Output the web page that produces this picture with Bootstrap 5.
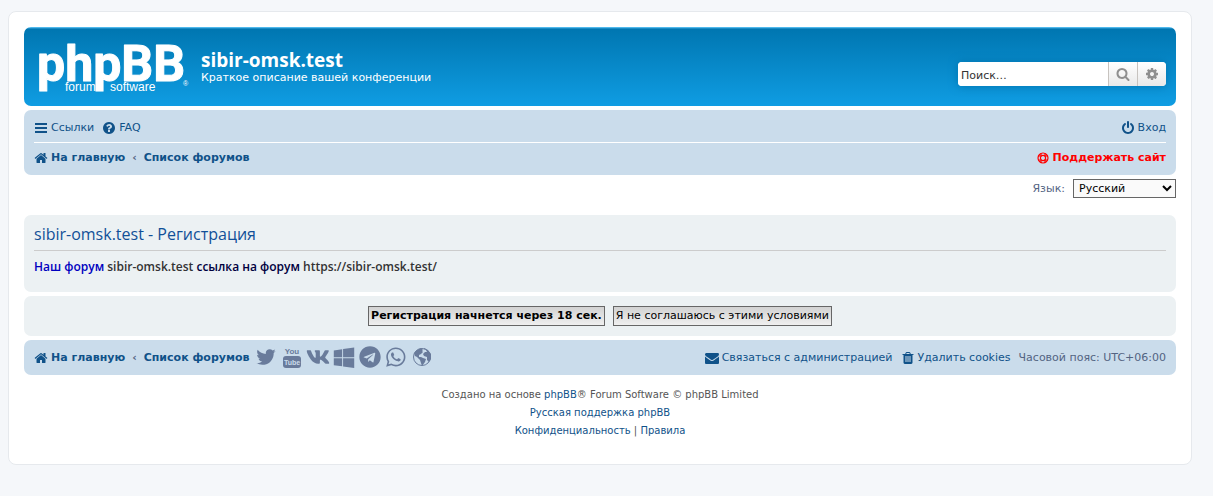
<!DOCTYPE html>
<html lang="ru">
<head>
<meta charset="utf-8">
<meta name="viewport" content="width=device-width, initial-scale=1">
<title>sibir-omsk.test - Регистрация</title>
<link href="https://cdn.jsdelivr.net/npm/bootstrap@5.3.0/dist/css/bootstrap.min.css" rel="stylesheet">
<script src="https://cdn.jsdelivr.net/npm/bootstrap@5.3.0/dist/js/bootstrap.bundle.min.js" defer></script>
<style>
  body { background: #f5f7fa; color: #536482; font: 11px/18px Verdana, "DejaVu Sans", sans-serif; padding: 11px 13px 31px 0; }
  a { color: #105289; text-decoration: none; }
  a:hover { color: #d31141; text-decoration: underline; }
  svg { fill: currentColor; flex: none; }
  .page-wrap { max-width: 1184px; background: #fff; border: 1px solid #e6e9ed; border-radius: 8px; padding: 15px 15px 24px; }
  .headerbar { min-height: 79px; border-radius: 7px; padding: 5px 10px 5px 14px; color: #fff; background: #12a3eb linear-gradient(to bottom, #6aceff 0, #0076b1 2px, #12a3eb 92px); }
  .site-name { padding: 0 0 2px 10px; }
  .site-logo { overflow: visible; }
  .site-title { font: 700 19px/24px "Open Sans", sans-serif; margin: 0; }
  .site-desc { margin: 0; line-height: 12px; }
  .search-box { height: 24px; border-radius: 4px; box-shadow: 0 0 10px #0075b0; overflow: hidden; margin-top: 14px; background: #fff; }
  .search-box input { width: 150px; border: 0; padding: 4px 3px 0; color: #333; font: inherit; }
  .search-box input::placeholder { color: #333; opacity: 1; }
  .search-box button { width: 29px; border: 0; border-left: 1px solid #c7c3bf; padding: 0; color: #8f8f8f; background: linear-gradient(to bottom, #fff, #e9e9e9); }
  .bar { background: #cadceb; border-radius: 7px; padding: 0 10px; }
  .bar-row { min-height: 35px; }
  .bar-row.top { min-height: 33px; padding-top: 3px; border-bottom: 1px solid #fff; }
  .bar-row.path { min-height: 32px; padding-bottom: 2px; }
  .bar .ic { height: 14px; width: auto; margin-right: 3px; }
  .crumbs a { font-weight: 700; }
  .sep { padding: 0 7px; }
  .crumbs a.support { color: #f00; }
  .lang { margin-bottom: 17px; }
  .lang select { width: 103px; height: 19px; border: 1px solid #666; background: #fafafa; color: #000; padding: 0 1px; font: inherit; }
  .panel { background: #ecf1f3; border-radius: 7px; padding: 10px; }
  .panel h2 { font: 400 16px/18px "Open Sans", sans-serif; color: #115098; margin: 0 0 8px; padding-bottom: 7px; border-bottom: 1px solid #ccc; }
  .terms { font: 600 12px/16px "Open Sans", sans-serif; color: #333; margin: 0; padding-bottom: 7px; }
  .t-blue { color: #0000bf; }
  .t-navy { color: #000040; }
  .btn-form { height: 20px; border: 1px solid #666; padding: 0 2px; color: #000; font: inherit; line-height: 16px; background: linear-gradient(to bottom, #d2d2d2, #efefef); }
  .social { padding: 0 0 2px 6px; }
  .social a { color: #697b9b; display: flex; justify-content: center; width: 22px; }
  .copyright { font-size: 10px; color: #555; padding-top: 11px; }
</style>
</head>
<body>
<div class="page-wrap mx-auto">
  <header class="headerbar d-flex justify-content-between align-items-center mb-1">
    <div class="d-flex align-items-center">
      <a href="#" class="text-white" aria-label="phpBB">
        <svg class="site-logo d-block" width="153" height="56" viewBox="0 0 153 56">
          <text x="-1" y="42" font-family="Roboto" font-weight="700" font-size="50" stroke="#fff" stroke-width="1" stroke-linejoin="round">phpBB</text>
          <text x="27" y="52" font-family="Liberation Sans" font-size="12">forum</text>
          <text x="72" y="52" font-family="Liberation Sans" font-size="12">software</text>
          <text x="145" y="47" font-family="Liberation Sans" font-size="7">®</text>
        </svg>
      </a>
      <div class="site-name">
        <h1 class="site-title">sibir-omsk.test</h1>
        <p class="site-desc">Краткое описание вашей конференции</p>
      </div>
    </div>
    <form class="search-box d-flex" role="search">
      <input type="text" placeholder="Поиск…" aria-label="Поиск">
      <button type="button" aria-label="Поиск"><svg width="14" height="14" viewBox="0 0 1792 1792"><path d="M1216 832q0-185-131.500-316.500t-316.500-131.500-316.500 131.500-131.500 316.500 131.500 316.500 316.500 131.500 316.500-131.500 131.500-316.500zm512 832q0 52-38 90t-90 38q-54 0-90-38l-343-342q-179 124-399 124-143 0-273.500-55.500t-225-150-150-225-55.500-273.500 55.500-273.500 150-225 225-150 273.500-55.500 273.500 55.500 225 150 150 225 55.500 273.500q0 220-124 399l343 343q37 37 37 90z"/></svg></button>
      <button type="button" aria-label="Расширенный поиск"><svg width="14" height="14" viewBox="0 0 1792 1792"><path d="M1152 896q0-106-75-181t-181-75-181 75-75 181 75 181 181 75 181-75 75-181zm512-109v222q0 12-8 23t-20 13l-185 28q-19 54-39 91 35 50 107 138 10 12 10 25t-9 23q-27 37-99 108t-94 71q-12 0-26-9l-138-108q-44 23-91 38-16 136-29 186-7 28-36 28h-222q-14 0-24.500-8.500t-11.500-21.500l-28-184q-49-16-90-37l-141 107q-10 9-25 9-14 0-25-11-126-114-165-168-7-10-7-23 0-12 8-23 15-21 51-66.500t54-70.500q-27-50-41-99l-183-27q-13-2-21-12.500t-8-23.500v-222q0-12 8-23t19-13l186-28q14-46 39-92-40-57-107-138-10-12-10-24 0-10 9-23 26-36 98.500-107.500t94.500-71.500q13 0 26 10l138 107q44-23 91-38 16-136 29-186 7-28 36-28h222q14 0 24.500 8.500t11.500 21.500l28 184q49 16 90 37l142-107q9-9 24-9 13 0 25 10 129 119 165 170 7 8 7 22 0 12-8 23-15 21-51 66.500t-54 70.500q26 50 41 98l183 28q13 2 21 12.500t8 23.500z"/></svg></button>
    </form>
  </header>

  <nav class="bar mb-1">
    <div class="bar-row top d-flex justify-content-between align-items-center">
      <div class="d-flex">
        <a href="#" class="d-flex align-items-center me-2"><svg class="ic" viewBox="0 0 14 14"><path d="M1 2h12v2H1zM1 6h12v2H1zM1 10h12v2H1z"/></svg>Ссылки</a>
        <a href="#" class="d-flex align-items-center"><svg class="ic" viewBox="0 0 1792 1792"><path fill-rule="evenodd" d="M1024 1376v-192q0-14-9-23t-23-9h-192q-14 0-23 9t-9 23v192q0 14 9 23t23 9h192q14 0 23-9t9-23zm256-672q0-88-55.500-163t-138.500-116-170-41q-243 0-371 213-15 24 8 42l132 100q7 6 19 6 16 0 25-12 53-68 86-92 34-24 86-24 48 0 85.500 26t37.500 59q0 38-20 61t-68 45q-63 28-115.500 86.500t-52.500 125.500v36q0 14 9 23t23 9h192q14 0 23-9t9-23q0-19 21.500-49.500t54.500-49.500q32-18 49-28.500t46-35 44.500-48 28-60.500 12.500-81zm384 192q0 209-103 385.500t-279.500 279.500-385.500 103-385.500-103-279.500-279.500-103-385.500 103-385.500 279.500-279.500 385.500-103 385.500 103 279.500 279.500 103 385.500z"/></svg>FAQ</a>
      </div>
      <a href="#" class="d-flex align-items-center"><svg class="ic" viewBox="0 0 1792 1792"><path d="M1664 896q0 156-61 298t-164 245-245 164-298 61-298-61-245-164-164-245-61-298q0-182 80.500-343t226.500-270q43-32 95.500-25t83.500 50q32 42 24.500 94.500t-49.500 84.500q-98 74-151.500 181t-53.500 228q0 104 40.500 198.500t109.500 163.500 163.500 109.500 198.500 40.500 198.500-40.500 163.500-109.500 109.500-163.500 40.500-198.500q0-121-53.500-228t-151.500-181q-42-32-49.500-84.500t24.500-94.500q31-43 84-50t95 25q146 109 226.500 270t80.500 343zm-640-768v640q0 52-38 90t-90 38-90-38-38-90v-640q0-52 38-90t90-38 90 38 38 90z"/></svg>Вход</a>
    </div>
    <div class="bar-row path crumbs d-flex justify-content-between align-items-center">
      <div class="d-flex align-items-center">
        <a href="#" class="d-flex align-items-center"><svg class="ic" viewBox="0 0 1792 1792"><path id="house" d="M1472 992v480q0 26-19 45t-45 19h-384v-384h-256v384h-384q-26 0-45-19t-19-45v-480q0-1 .5-3t.5-3l575-474 575 474q1 2 1 6zm223-69l-62 74q-8 9-21 11h-3q-13 0-21-7l-692-577-692 577q-12 8-24 7-13-2-21-11l-62-74q-8-10-7-23.500t11-21.500l719-599q32-26 76-26t76 26l244 204v-195q0-14 9-23t23-9h192q14 0 23 9t9 23v408l219 182q10 8 11 21.500t-7 23.500z"/></svg>На главную</a>
        <b class="sep">‹</b>
        <a href="#">Список форумов</a>
      </div>
      <a href="#" class="support d-flex align-items-center"><svg class="ic" viewBox="0 0 14 14"><g fill="none" stroke="currentColor"><circle cx="7" cy="7" r="5" stroke-width="1.200"/><circle cx="7" cy="7" r="2.600" stroke-width="1.200"/><path stroke-width="1.200" d="M5 2v3H2M9 2v3h3M5 12V9H2M9 12V9h3"/></g></svg>Поддержать сайт</a>
    </div>
  </nav>

  <form class="lang d-flex justify-content-end align-items-center">
    <label for="lang" class="pe-1 me-1">Язык:</label>
    <select id="lang"><option>Русский</option></select>
  </form>

  <main>
    <section class="panel mb-1">
      <h2>sibir-omsk.test - Регистрация</h2>
      <p class="terms"><span class="t-blue">Наш форум</span> sibir-omsk.test <span class="t-navy">ссылка на форум</span> https://sibir-omsk.test/</p>
    </section>
    <form class="panel mb-1 d-flex justify-content-center gap-2">
      <button type="button" class="btn-form fw-bold">Регистрация начнется через 18 сек.</button>
      <button type="button" class="btn-form">Я не соглашаюсь с этими условиями</button>
    </form>
  </main>

  <footer>
    <div class="bar bar-row d-flex justify-content-between align-items-center">
      <div class="crumbs d-flex align-items-center">
        <a href="#" class="d-flex align-items-center"><svg class="ic" viewBox="0 0 1792 1792"><use href="#house"/></svg>На главную</a>
        <b class="sep">‹</b>
        <a href="#">Список форумов</a>
        <div class="social d-flex gap-1">
          <a href="#" aria-label="Twitter"><svg width="22" height="22" viewBox="0 0 1792 1792"><path d="M1684 408q-67 98-162 167 1 14 1 42 0 130-38 259.500t-115.500 248.500-184.500 210.500-258 146-323 54.500q-271 0-496-145 35 4 78 4 225 0 401-138-105-2-188-64.500t-114-159.500q33 5 61 5 43 0 85-11-112-23-185.500-111.500t-73.500-205.500v-4q68 38 146 41-66-44-105-115t-39-154q0-88 44-163 121 149 294.500 238.500t371.500 99.500q-8-38-8-74 0-134 94.500-228.500t228.500-94.500q140 0 236 102 109-21 205-78-37 115-142 178 93-10 186-50z"/></svg></a>
          <a href="#" aria-label="YouTube"><svg width="22" height="22" viewBox="0 0 22 22"><text x="11" y="8" text-anchor="middle" font-family="Liberation Sans" font-weight="700" font-size="8">You</text><rect x="2" y="10" width="18" height="12" rx="3"/><text x="11" y="19" text-anchor="middle" font-family="Liberation Sans" font-weight="700" font-size="7" fill="#cadceb">Tube</text></svg></a>
          <a href="#" aria-label="VK"><svg width="24" height="22" viewBox="0 0 576 512"><path d="M545 117.700c3.700-12.500 0-21.700-17.800-21.700h-58.900c-15 0-21.900 7.900-25.600 16.700 0 0-30 73.100-72.400 120.500-13.700 13.700-20 18.100-27.500 18.100-3.700 0-9.400-4.400-9.400-16.900V117.700c0-15-4.200-21.700-16.600-21.700h-92.600c-9.400 0-15 7-15 13.500 0 14.200 21.200 17.500 23.400 57.500v86.800c0 19-3.400 22.500-10.900 22.500-20 0-68.600-73.400-97.400-157.400-5.800-16.300-11.500-22.900-26.600-22.900H38.800c-16.800 0-20.200 7.900-20.200 16.700 0 15.600 20 93.100 93.100 195.500C160.400 378.100 229 416 291.400 416c37.500 0 42.100-8.400 42.100-22.900 0-66.800-3.400-73.100 15.400-73.100 8.700 0 23.700 4.400 58.700 38.100 40 40 46.600 57.900 69 57.900h58.900c16.800 0 25.300-8.400 20.400-25-11.200-34.900-86.900-106.700-90.300-111.500-8.700-11.200-6.200-16.200 0-26.200.1-.1 72-101.300 79.400-135.600z"/></svg></a>
          <a href="#" aria-label="Windows"><svg width="22" height="22" viewBox="0 0 1792 1792"><path d="M746 1006v651l-682-94v-557h682zm0-743v659h-682v-565zm982 743v786l-907-125v-661h907zm0-878v794h-907v-669z"/></svg></a>
          <a href="#" aria-label="Telegram"><svg width="22" height="22" viewBox="0 0 496 512"><path d="M248 8C111 8 0 119 0 256s111 248 248 248 248-111 248-248S385 8 248 8zm121.800 169.900l-40.700 191.800c-3 13.600-11.100 16.900-22.400 10.500l-62-45.700-29.900 28.800c-3.300 3.300-6.100 6.100-12.500 6.100l4.400-63.100 114.900-103.800c5-4.400-1.100-6.900-7.700-2.500l-142 89.400-61.200-19.100c-13.300-4.200-13.600-13.300 2.800-19.700l239.100-92.200c11.100-4 20.800 2.700 17.200 19.500z"/></svg></a>
          <a href="#" aria-label="WhatsApp"><svg width="22" height="22" viewBox="-28 0 512 512"><path d="M380.900 97.100C339 55.100 283.200 32 223.900 32c-122.400 0-222 99.600-222 222 0 39.100 10.200 77.300 29.600 111L0 480l117.700-30.900c32.400 17.700 68.900 27 106.100 27h.1c122.300 0 224.100-99.600 224.100-222 0-59.300-25.200-115-67.100-157zm-157 341.600c-33.200 0-65.700-8.900-94-25.700l-6.700-4-69.800 18.300L72 359.200l-4.400-7c-18.500-29.400-28.200-63.300-28.200-98.200 0-101.700 82.800-184.500 184.600-184.500 49.300 0 95.600 19.200 130.400 54.100 34.800 34.900 56.200 81.200 56.100 130.500 0 101.800-84.900 184.600-186.600 184.600zm101.200-138.200c-5.500-2.800-32.800-16.200-37.900-18-5.100-1.900-8.800-2.800-12.500 2.800-3.700 5.600-14.300 18-17.600 21.800-3.200 3.700-6.500 4.200-12 1.400-32.600-16.300-54-29.100-75.500-66-5.700-9.800 5.700-9.100 16.300-30.300 1.800-3.700.9-6.900-.5-9.700-1.400-2.800-12.500-30.100-17.100-41.200-4.500-10.800-9.100-9.300-12.500-9.500-3.200-.2-6.900-.2-10.600-.2-3.700 0-9.700 1.400-14.800 6.900-5.100 5.600-19.400 19-19.400 46.300 0 27.300 19.900 53.700 22.600 57.400 2.800 3.700 39.100 59.700 94.800 83.800 35.200 15.200 49 16.500 66.600 13.900 10.700-1.600 32.800-13.400 37.400-26.400 4.600-13 4.600-24.100 3.200-26.400-1.300-2.500-5-3.900-10.500-6.600z"/></svg></a>
          <a href="#" aria-label="Сайт"><svg width="22" height="22" viewBox="0 0 22 22"><circle cx="11" cy="11" r="8.500" fill="none" stroke="currentColor"/><path d="M3 7l3-3 4-2 2 2-1 1 1 1-2 2-2 1 0 2 2 0 2 1 3 1-1 3-3 4-1-3-1-3-3-3-2-1zM13 2l4 2 3 4v5l-2 3-2-2v-3l-3-1-1-2 2-2 2 0-1-2-2-1z"/></svg></a>
        </div>
      </div>
      <div class="d-flex align-items-center">
        <a href="#" class="d-flex align-items-center me-2"><svg class="ic" viewBox="0 0 1792 1792"><path d="M1792 710v794q0 66-47 113t-113 47h-1472q-66 0-113-47t-47-113v-794q44 49 101 87 362 246 497 345 57 42 92.500 65.500t94.500 48 110 24.500h2q51 0 110-24.500t94.500-48 92.500-65.500q170-123 498-345 57-39 100-87zm0-294q0 79-49 151t-122 123q-376 261-468 325-10 7-42.500 31t-54 38.500-52 32.500-57.500 27-50 9h-2q-23 0-50-9t-57.500-27-52-32.500-54-38.500-42.500-31q-91-64-262-182.500t-205-142.500q-62-42-117-115.500t-55-136.500q0-78 41.500-130t118.500-52h1472q65 0 112.500 47t47.500 113z"/></svg>Связаться с администрацией</a>
        <a href="#" class="d-flex align-items-center me-2"><svg class="ic" viewBox="0 0 1792 1792"><path d="M704 1376v-704q0-14-9-23t-23-9h-64q-14 0-23 9t-9 23v704q0 14 9 23t23 9h64q14 0 23-9t9-23zm256 0v-704q0-14-9-23t-23-9h-64q-14 0-23 9t-9 23v704q0 14 9 23t23 9h64q14 0 23-9t9-23zm256 0v-704q0-14-9-23t-23-9h-64q-14 0-23 9t-9 23v704q0 14 9 23t23 9h64q14 0 23-9t9-23zm-544-992h448l-48-117q-7-9-17-11h-317q-10 2-17 11zm928 32v64q0 14-9 23t-23 9h-96v948q0 83-47 143.500t-113 60.500h-832q-66 0-113-58.500t-47-141.500v-952h-96q-14 0-23-9t-9-23v-64q0-14 9-23t23-9h309l70-167q15-37 54-63t79-26h320q40 0 79 26t54 63l70 167h309q14 0 23 9t9 23z"/></svg>Удалить cookies</a>
        <span>Часовой пояс: UTC+06:00</span>
      </div>
    </div>
    <div class="copyright text-center">
      <div>Создано на основе <a href="#">phpBB</a>® Forum Software © phpBB Limited</div>
      <div><a href="#">Русская поддержка phpBB</a></div>
      <div><a href="#">Конфиденциальность</a> | <a href="#">Правила</a></div>
    </div>
  </footer>
</div>
</body>
</html>
